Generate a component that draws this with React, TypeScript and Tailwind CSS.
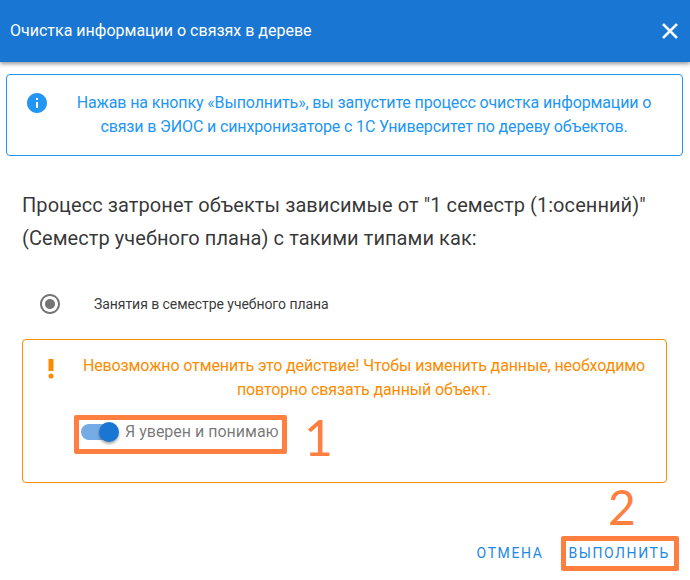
import React from 'react';

// Диалог очистки информации о связях в дереве
export default function App() {
  return (
    <div className="relative flex flex-col w-[690px] h-[580px] overflow-hidden bg-white font-['Roboto',sans-serif]">
      <header className="flex items-center justify-between h-[62px] pl-[10px] pr-[7px] bg-[#1976d2] shadow-[0_2px_4px_rgba(0,0,0,0.4)] text-white">
        <h1 className="text-[16px] font-normal">Очистка информации о связях в дереве</h1>
        <svg width="26" height="26" viewBox="0 0 24 24" fill="white" stroke="white" strokeWidth="0.5" aria-label="Закрыть">
          <path d="M19 6.41 17.59 5 12 10.59 6.41 5 5 6.41 10.59 12 5 17.59 6.41 19 12 13.41 17.59 19 19 17.59 13.41 12z" />
        </svg>
      </header>

      <div className="flex mt-3 mx-[6px] w-[677px] h-[82px] border border-[#2196f3] rounded pl-[18px] pt-4 text-[#2196f3]">
        <svg width="24" height="24" viewBox="0 0 24 24" fill="#2196f3" className="shrink-0 w-[24px] h-[24px]">
          <path d="M12 2C6.48 2 2 6.48 2 12s4.48 10 10 10 10-4.48 10-10S17.52 2 12 2zm1 15h-2v-6h2v6zm0-8h-2V7h2v2z" />
        </svg>
        <p className="ml-[14px] w-[602px] text-center text-[16px] leading-6 tracking-[-0.13px]">
          Нажав на кнопку «Выполнить», вы запустите процесс очистка информации о связи в ЭИОС и синхронизаторе с 1С Университет по дереву объектов.
        </p>
      </div>

      <p className="mt-[33px] mx-[22px] text-[20px] leading-[33px] tracking-[0.07px] text-[rgba(0,0,0,0.8)]">
        Процесс затронет объекты зависимые от "1 семестр (1:осенний)" (Семестр учебного плана) с такими типами как:
      </p>

      <div className="flex items-center mt-[37px] ml-[38px] h-6">
        <svg width="24" height="24" viewBox="0 0 24 24" fill="#757575" className="shrink-0">
          <path d="M12 7c-2.76 0-5 2.24-5 5s2.24 5 5 5 5-2.24 5-5-2.24-5-5-5zm0-5C6.48 2 2 6.48 2 12s4.48 10 10 10 10-4.48 10-10S17.52 2 12 2zm0 18c-4.42 0-8-3.58-8-8s3.58-8 8-8 8 3.58 8 8-3.58 8-8 8z" />
        </svg>
        <span className="ml-[32px] text-[14px] tracking-[-0.06px] text-[rgba(0,0,0,0.8)]">Занятия в семестре учебного плана</span>
      </div>

      <div className="mt-[23px] mx-[22px] w-[645px] h-[144px] border border-[#fb8c00] rounded pt-[14px]">
        <div className="flex">
          <span className="w-[53px] shrink-0 pl-[16px]">
            <svg width="24" height="24" viewBox="0 0 24 24" fill="#fb8c00" className="mt-[1px]">
              <path d="M9.5 4h5v12h-5zM12 18.5a2.5 2.5 0 1 1 0 5 2.5 2.5 0 0 1 0-5z" />
            </svg>
          </span>
          <p className="w-[576px] text-center text-[16px] leading-6 tracking-[-0.12px] text-[#fb8c00]">
            Невозможно отменить это действие! Чтобы изменить данные, необходимо повторно связать данный объект.
          </p>
        </div>
        <div className="flex items-center mt-[16px] ml-[58px] h-7">
          <span className="relative block w-[38px] h-[14px]">
            <span className="absolute left-0 top-[-1px] w-[36px] h-[16px] rounded-full bg-[#76ace6]" />
            <span className="absolute left-[18px] top-[-3px] w-5 h-5 rounded-full bg-[#1976d2] shadow-[0_2px_3px_rgba(0,0,0,0.35)]" />
          </span>
          <span className="ml-[6px] text-[16px] text-[rgba(0,0,0,0.55)]">Я уверен и понимаю</span>
        </div>
      </div>

      <div className="flex justify-end items-center gap-[25px] mt-[60px] pr-[20px] text-[14px] tracking-[1.6px] text-[#1e88e5]">
        <button>ОТМЕНА</button>
        <button>ВЫПОЛНИТЬ</button>
      </div>

      {/* пометки поверх скриншота */}
      <div className="absolute left-[74px] top-[415px] w-[213px] h-[39px] border-[5px] border-[#ff7f41] rounded-[2px]" />
      <div className="absolute left-[561px] top-[536px] w-[118px] h-[35px] border-[5px] border-[#ff7f41] rounded-[2px]" />
      <span className="absolute left-[304px] top-[407px] text-[50px] leading-[60px] font-['Lato',sans-serif] text-[#ff7f41]">1</span>
      <span className="absolute left-[608px] top-[477px] text-[48px] leading-[60px] font-['Lato',sans-serif] text-[#ff7f41]">2</span>
    </div>
  );
}
